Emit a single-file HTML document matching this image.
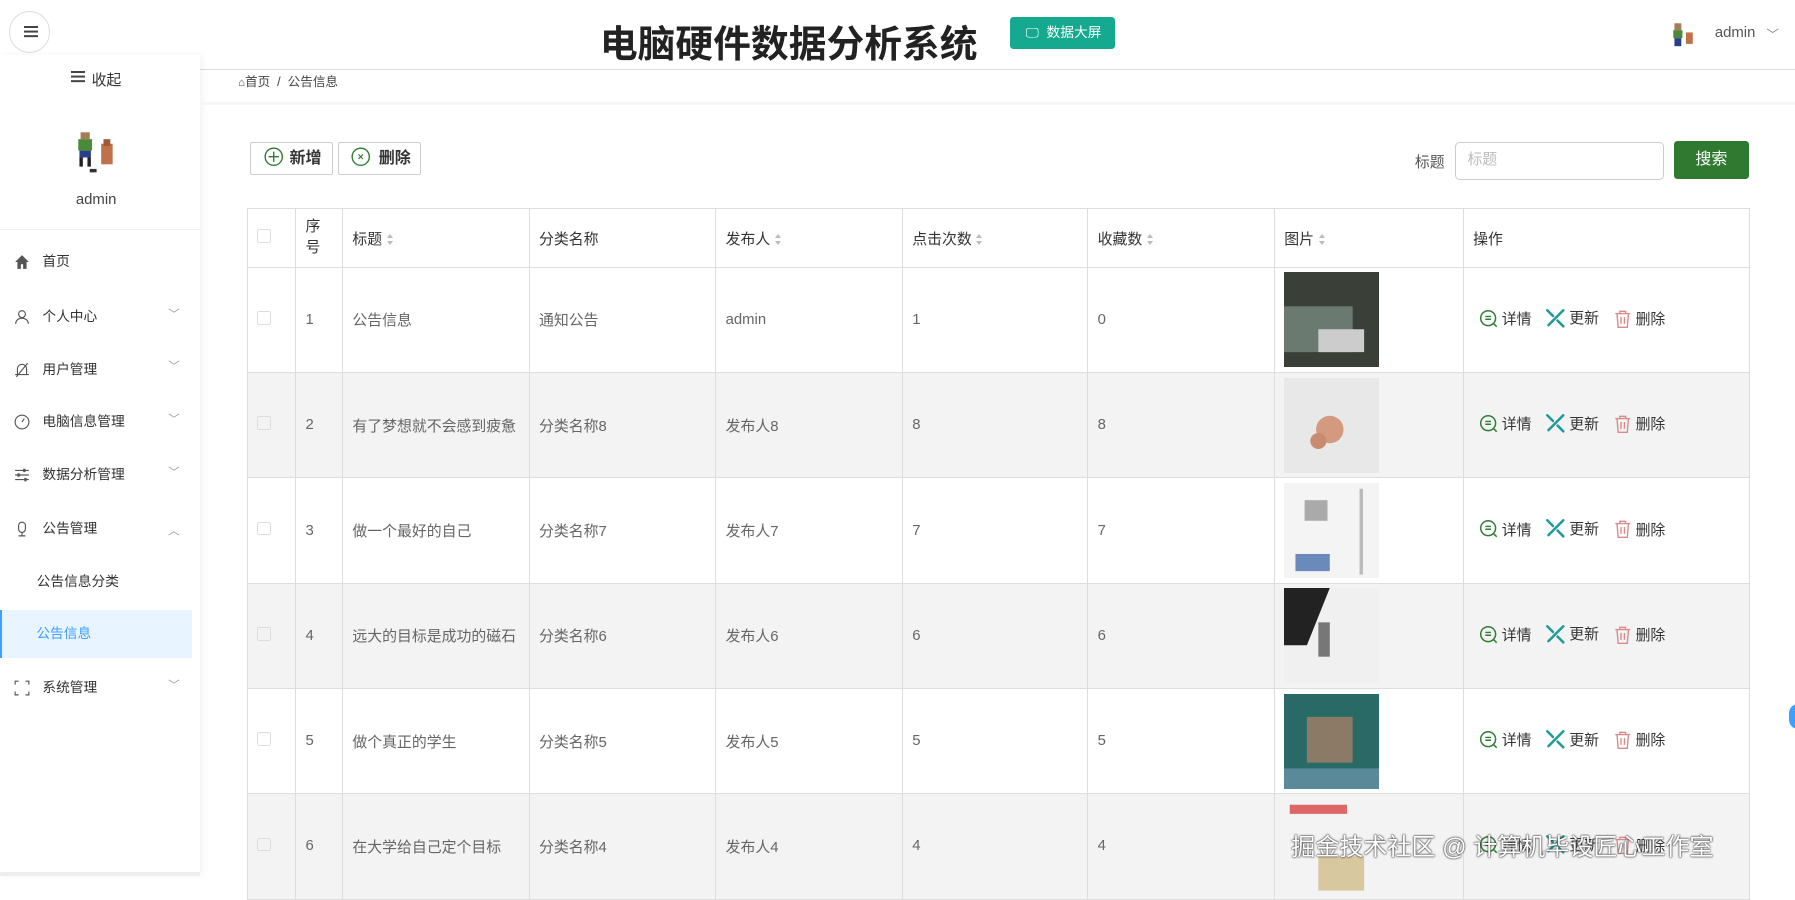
<!DOCTYPE html>
<html><head><meta charset="utf-8"><style>
html{zoom:1.14477}
*{box-sizing:border-box;margin:0;padding:0}
body{width:1568px;height:769px;overflow:hidden;background:#fff;font-family:"Liberation Sans","Noto Sans CJK SC",sans-serif;color:#333;position:relative}
.abs{position:absolute}
.hdr{left:0;top:0;width:1568px;height:61px;border-bottom:1px solid #ddd;background:#fff}
.side{left:0;top:48px;width:175px;height:717px;background:#fff;box-shadow:2px 0 6px rgba(0,0,0,.05);border-bottom:4px solid #eee}
.mi{position:absolute;left:0;width:168px;height:42px;font-size:12px;color:#333;line-height:42px}
.mi .ic{position:absolute;left:12px;top:14px;width:14px;height:14px}
.mi .tx{position:absolute;left:37px}
.mi .ch{position:absolute;left:147px;top:-2px;color:#999;font-size:10px}
table{border-collapse:collapse;position:absolute;left:216px;top:182px;font-size:13px;color:#666;table-layout:fixed}
td,th{border:1px solid #ddd;text-align:left;padding:0 8px;font-weight:normal;white-space:nowrap;overflow:hidden}
th{height:51px;color:#333}
td{height:92px}
tr.g td{background:#f3f3f3}
.s{display:inline-block;width:6px;height:10px;vertical-align:middle;margin-left:4px;position:relative}
.s:before{content:"";position:absolute;top:0;left:0;border:3px solid transparent;border-bottom:4px solid #bbb;border-top:0}
.s:after{content:"";position:absolute;bottom:0;left:0;border:3px solid transparent;border-top:4px solid #bbb;border-bottom:0}
.cb{display:inline-block;width:12px;height:12px;border:1px solid #ddd;border-radius:2px}
.img{width:83px;height:83px;display:block}
.act{font-size:13px;color:#333;white-space:nowrap}
.act span{display:inline-flex;align-items:center;margin-right:12px}
.act svg{margin-right:3px}
</style></head><body>
<div class="abs hdr"></div>
<div class="abs" style="left:8px;top:10px;width:36px;height:36px;border:1px solid #ddd;border-radius:50%;background:#fff"><div style="position:absolute;left:12px;top:12px;width:12px;height:2px;background:#444;box-shadow:0 4px 0 #444,0 8px 0 #444"></div></div>
<div class="abs" style="left:524px;top:11px;font-size:33px;font-weight:bold;color:#222">电脑硬件数据分析系统</div>
<div class="abs" style="left:882px;top:15px;width:92px;height:28px;background:#15a98f;border-radius:3px;color:#fff;font-size:12px;line-height:28px;padding-left:14px">🖵&nbsp; 数据大屏</div>
<div class="abs" style="left:1460px;top:18px;width:22px;height:24px"><svg width="22" height="24"><rect x="3" y="2" width="6" height="6" fill="#a67c52"/><rect x="2" y="8" width="8" height="7" fill="#4a8a3a"/><rect x="3" y="15" width="6" height="7" fill="#2a3f8a"/><rect x="13" y="10" width="6" height="10" fill="#c0704a"/></svg></div>
<div class="abs" style="left:1498px;top:22px;font-size:13px;color:#555">admin</div>
<div class="abs" style="left:1543px;top:21px;font-size:11px;color:#888">﹀</div>

<div class="abs side">
 <div class="abs" style="left:62px;top:12px;font-size:13px;color:#333"><span style="display:inline-block;width:12px;height:2px;background:#444;box-shadow:0 4px 0 #444,0 8px 0 #444;vertical-align:top;margin-top:2px;margin-right:6px"></span>收起</div>
 <svg class="abs" style="left:66px;top:66px" width="40" height="38"><rect x="4" y="2" width="8" height="6" fill="#a67c52"/><rect x="2" y="8" width="12" height="10" fill="#4a8a3a"/><rect x="3" y="18" width="10" height="6" fill="#2a3f8a"/><rect x="3" y="24" width="3" height="8" fill="#222"/><rect x="10" y="24" width="3" height="8" fill="#222"/><rect x="22" y="12" width="10" height="18" fill="#c0704a"/><rect x="24" y="8" width="6" height="6" fill="#a05a3a"/><rect x="12" y="34" width="6" height="3" fill="#333"/></svg>
 <div class="abs" style="left:0;width:168px;top:120px;text-align:center;font-size:13px;color:#444">admin</div>
 <div class="abs" style="left:0;top:152px;width:175px;height:1px;background:#f0f0f0"></div>
</div>
<div class="mi" style="top:208px"><svg class="ic" viewBox="0 0 14 14"><path d="M7 1L1 7h2v6h3V9h2v4h3V7h2z" fill="#555"/></svg><span class="tx">首页</span></div>
<div class="mi" style="top:256px"><svg class="ic" viewBox="0 0 14 14"><circle cx="7" cy="4.5" r="3" fill="none" stroke="#555"/><path d="M1.5 13c0-3 2.5-5 5.5-5s5.5 2 5.5 5" fill="none" stroke="#555"/></svg><span class="tx">个人中心</span><span class="ch">﹀</span></div>
<div class="mi" style="top:302px"><svg class="ic" viewBox="0 0 14 14"><path d="M3 11V6a4 4 0 018 0v5zM1 11h12M2 13L12 1" fill="none" stroke="#555"/></svg><span class="tx">用户管理</span><span class="ch">﹀</span></div>
<div class="mi" style="top:348px"><svg class="ic" viewBox="0 0 14 14"><circle cx="7" cy="7" r="6" fill="none" stroke="#555"/><path d="M7 7l2-3" stroke="#555"/></svg><span class="tx">电脑信息管理</span><span class="ch">﹀</span></div>
<div class="mi" style="top:394px"><svg class="ic" viewBox="0 0 14 14"><path d="M1 3h12M1 7h12M1 11h12" stroke="#555"/><rect x="8" y="1.5" width="2" height="3" fill="#555"/><rect x="3" y="5.5" width="2" height="3" fill="#555"/><rect x="9" y="9.5" width="2" height="3" fill="#555"/></svg><span class="tx">数据分析管理</span><span class="ch">﹀</span></div>
<div class="mi" style="top:441px"><svg class="ic" viewBox="0 0 14 14"><rect x="4" y="1" width="6" height="9" rx="3" fill="none" stroke="#555"/><path d="M7 10v3M4 13h6" stroke="#555"/></svg><span class="tx">公告管理</span><span class="ch" style="transform:rotate(180deg);top:0">﹀</span></div>
<div class="mi" style="top:487px"><span class="tx" style="left:32px">公告信息分类</span></div>
<div class="mi" style="top:533px;background:#e8f4ff;border-left:2px solid #409eff;color:#409eff"><span class="tx" style="left:30px">公告信息</span></div>
<div class="mi" style="top:580px"><svg class="ic" viewBox="0 0 14 14"><path d="M1 4V1h3M10 1h3v3M13 10v3h-3M4 13H1v-3" fill="none" stroke="#555"/></svg><span class="tx">系统管理</span><span class="ch">﹀</span></div>

<div class="abs" style="left:175px;top:89px;width:1393px;height:3px;background:#f6f6f6"></div>
<div class="abs" style="left:208px;top:62px;font-size:11px;color:#444"><span style="font-size:10px">⌂</span>首页 &nbsp;/&nbsp; 公告信息</div>

<div class="abs" style="left:218px;top:124px;width:73px;height:29px;border:1px solid #ccc;border-radius:2px;font-size:14px;font-weight:bold;line-height:27px;padding-left:12px"><svg width="17" height="17" style="vertical-align:-3px;margin-right:5px"><circle cx="8.5" cy="8.5" r="7.5" fill="none" stroke="#2e7d32" stroke-width="1.2"/><path d="M8.5 4v9M4 8.5h9" stroke="#2e7d32" stroke-width="1.2"/></svg>新增</div>
<div class="abs" style="left:295px;top:124px;width:73px;height:29px;border:1px solid #ccc;border-radius:2px;font-size:14px;font-weight:bold;line-height:27px;padding-left:11px"><svg width="17" height="17" style="vertical-align:-3px;margin-right:7px"><circle cx="8.5" cy="8.5" r="7.5" fill="none" stroke="#2e7d32" stroke-width="1.2"/><path d="M6.5 6.5l4 4M10.5 6.5l-4 4" stroke="#2e7d32"/></svg>删除</div>

<div class="abs" style="left:1236px;top:132px;font-size:13px;color:#555">标题</div>
<div class="abs" style="left:1271px;top:124px;width:183px;height:33px;border:1px solid #ccc;border-radius:4px;font-size:13px;color:#bbb;line-height:31px;padding-left:10px">标题</div>
<div class="abs" style="left:1462px;top:123px;width:66px;height:33px;background:#2f7a30;border-radius:3px;color:#fff;font-size:14px;line-height:33px;text-align:center">搜索</div>

<table>
<colgroup><col style="width:42px"><col style="width:41px"><col style="width:163px"><col style="width:163px"><col style="width:163px"><col style="width:162px"><col style="width:163px"><col style="width:165px"><col style="width:250px"></colgroup>
<tr><th><span class="cb"></span></th><th style="line-height:18px">序<br>号</th><th>标题<i class="s"></i></th><th>分类名称</th><th>发布人<i class="s"></i></th><th>点击次数<i class="s"></i></th><th>收藏数<i class="s"></i></th><th>图片<i class="s"></i></th><th>操作</th></tr>
<tr><td><span class="cb"></span></td><td>1</td><td>公告信息</td><td>通知公告</td><td>admin</td><td>1</td><td>0</td><td><svg class="img"><rect width="83" height="83" fill="#3a3f38"/><rect x="0" y="30" width="60" height="40" fill="#6a7a70"/><rect x="30" y="50" width="40" height="20" fill="#ccc"/></svg></td><td class="act">@A@</td></tr>
<tr class="g"><td><span class="cb"></span></td><td>2</td><td>有了梦想就不会感到疲惫</td><td>分类名称8</td><td>发布人8</td><td>8</td><td>8</td><td><svg class="img"><rect width="83" height="83" fill="#e8e8e8"/><circle cx="40" cy="45" r="12" fill="#d49a80"/><circle cx="30" cy="55" r="7" fill="#c98a70"/></svg></td><td class="act">@A@</td></tr>
<tr><td><span class="cb"></span></td><td>3</td><td>做一个最好的自己</td><td>分类名称7</td><td>发布人7</td><td>7</td><td>7</td><td><svg class="img"><rect width="83" height="83" fill="#f4f4f4"/><rect x="66" y="5" width="3" height="75" fill="#bbb"/><rect x="18" y="15" width="20" height="18" fill="#aaa"/><rect x="10" y="62" width="30" height="15" fill="#6a8abb"/></svg></td><td class="act">@A@</td></tr>
<tr class="g"><td><span class="cb"></span></td><td>4</td><td>远大的目标是成功的磁石</td><td>分类名称6</td><td>发布人6</td><td>6</td><td>6</td><td><svg class="img"><rect width="83" height="83" fill="#f0f0f0"/><path d="M0 0h40L20 50H0z" fill="#222"/><rect x="30" y="30" width="10" height="30" fill="#777"/></svg></td><td class="act">@A@</td></tr>
<tr><td><span class="cb"></span></td><td>5</td><td>做个真正的学生</td><td>分类名称5</td><td>发布人5</td><td>5</td><td>5</td><td><svg class="img"><rect width="83" height="83" fill="#2a6a66"/><rect x="20" y="20" width="40" height="40" fill="#8a7a66"/><rect x="0" y="65" width="83" height="18" fill="#5a8a9a"/></svg></td><td class="act">@A@</td></tr>
<tr class="g"><td><span class="cb"></span></td><td>6</td><td>在大学给自己定个目标</td><td>分类名称4</td><td>发布人4</td><td>4</td><td>4</td><td><svg class="img"><rect width="83" height="83" fill="#f3f3f3"/><rect x="5" y="5" width="50" height="8" fill="#d66"/><rect x="30" y="50" width="40" height="30" fill="#d8c8a0"/></svg></td><td class="act">@A@</td></tr>
</table>
<div class="abs" style="left:1128px;top:722px;font-size:21px;color:#fff;text-shadow:0 0 2px #333,0 0 1px #000;white-space:nowrap">掘金技术社区 @ 计算机毕设匠心工作室</div>
<div class="abs" style="left:1563px;top:615px;width:16px;height:22px;border-radius:8px;background:#409eff"></div>
<script>
var a='<span><svg width="17" height="17" viewBox="0 0 17 17"><circle cx="8" cy="8" r="6.5" fill="none" stroke="#2e7d32" stroke-width="1.3"/><path d="M5.5 6.5h5M5.5 9h5M12.5 12.5l3 3" stroke="#2e7d32" stroke-width="1.3"/></svg>详情</span><span><svg width="18" height="18" viewBox="0 0 18 18"><path d="M2 2l5 5M11 11l5 5M16 2l-10 10M3 15l3-3" stroke="#1e9a9a" stroke-width="2.2" stroke-linecap="round"/></svg>更新</span><span><svg width="17" height="17" viewBox="0 0 17 17"><path d="M2 4h13M6 4V2h5v2M3.5 4l1 12h8l1-12M7 7v6M10 7v6" fill="none" stroke="#d98a8a" stroke-width="1.2"/></svg>删除</span>';
document.querySelectorAll('.act').forEach(function(e){e.innerHTML=a;e.style.paddingLeft='13px'});
</script>
</body></html>
